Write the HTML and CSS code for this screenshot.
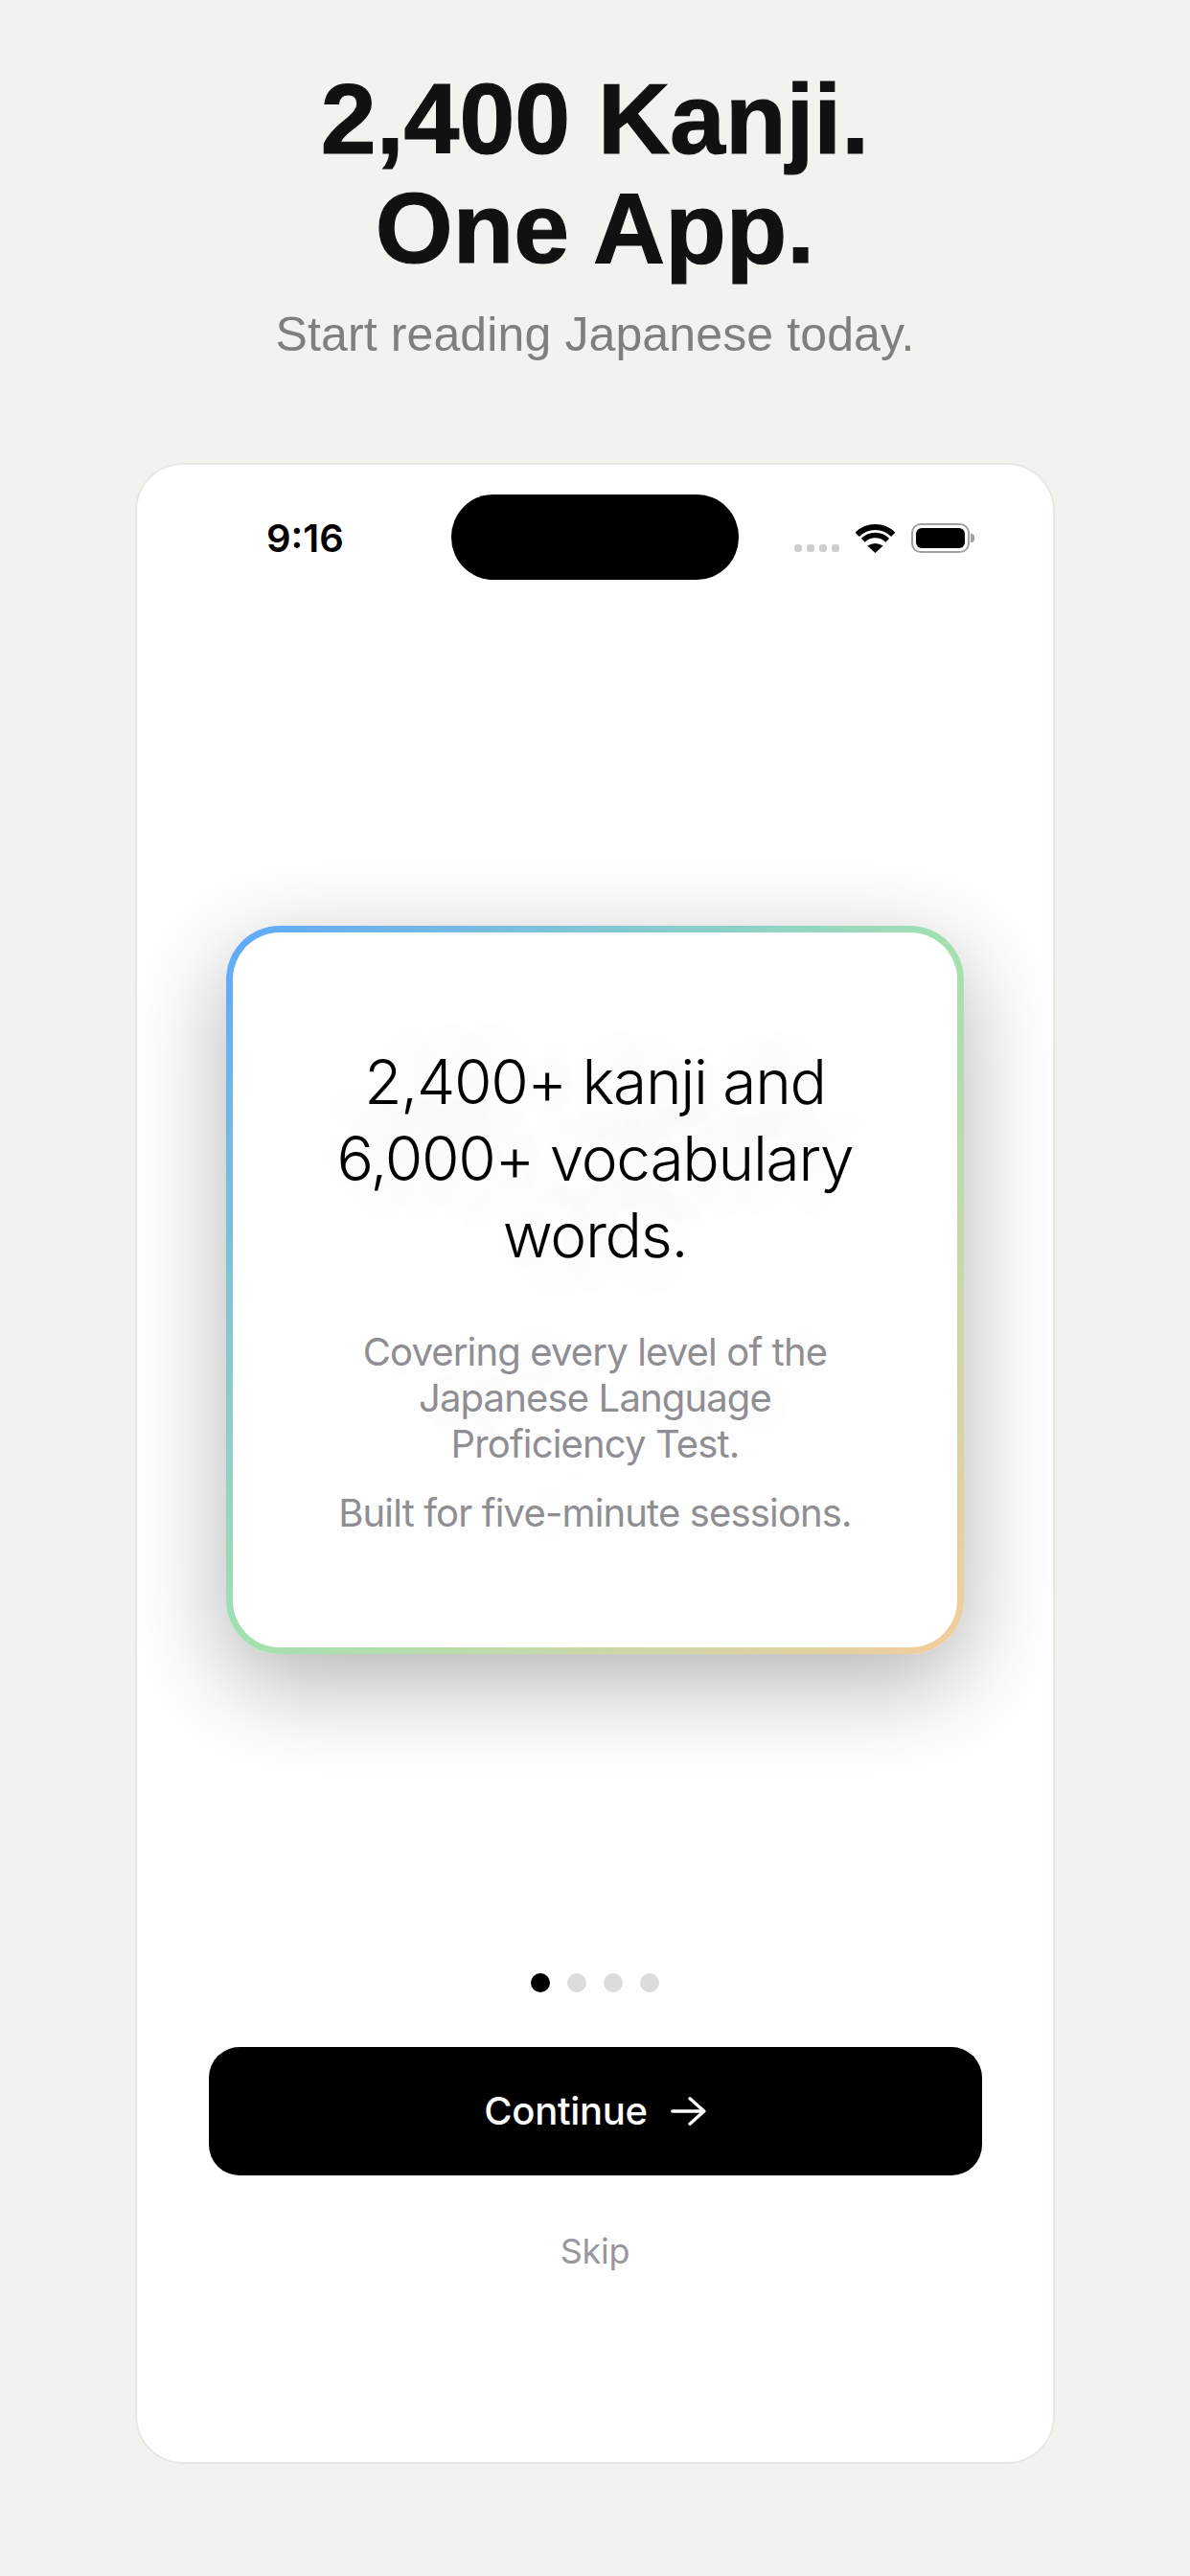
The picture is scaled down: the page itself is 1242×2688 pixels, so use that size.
FILE: index.html
```html
<!DOCTYPE html>
<html lang="en">
<head>
<meta charset="utf-8">
<title>2,400 Kanji. One App.</title>
<link rel="stylesheet" href="styles.css">
</head>
<body>
<header class="hero">
  <h1 class="hero-title">2,400 Kanji.<br>One App.</h1>
  <p class="hero-sub">Start reading Japanese today.</p>
</header>
<main class="phone">
  <div class="status">
    <span class="time">9:16</span>
    <div class="island"></div>
    <div class="status-icons">
      <div class="signal"><i></i><i></i><i></i><i></i></div>
      <svg class="wifi" width="41" height="30" viewBox="0 0 41 30" aria-hidden="true">
        <path d="M1.8 10.8A26.5 26.5 0 0 1 39.2 10.8" fill="none" stroke="#000" stroke-width="6"/>
        <path d="M7.8 16.7A18 18 0 0 1 33.2 16.7" fill="none" stroke="#000" stroke-width="5.5"/>
        <path d="M20.5 30L12.3 22.6Q20.5 17.6 28.7 22.6Z" fill="#000"/>
      </svg>
      <div class="battery"><div class="battery-body"><div class="battery-fill"></div></div><div class="battery-cap"></div></div>
    </div>
  </div>
  <section class="card">
    <div class="card-inner">
      <h2 class="card-title">2,400+ kanji and<br>6,000+ vocabulary<br>words.</h2>
      <p class="card-text">Covering every level of the<br>Japanese Language<br>Proficiency Test.</p>
      <p class="card-text card-text-last">Built for five-minute sessions.</p>
    </div>
  </section>
  <div class="pager"><i class="active"></i><i></i><i></i><i></i></div>
  <button class="continue" type="button">
    <span>Continue</span>
    <svg width="37" height="30" viewBox="0 0 37 30" aria-hidden="true"><path d="M1.8 15H34.5M20 1.8L34.8 15L20 28.2" fill="none" stroke="#fff" stroke-width="3.4" stroke-linecap="round" stroke-linejoin="round"/></svg>
  </button>
  <div class="skip">Skip</div>
</main>
</body>
</html>
```
FILE: styles.css
```css
* { box-sizing: border-box; }
html, body { margin: 0; padding: 0; }
body {
  width: 1242px;
  height: 2688px;
  background: #f3f2ef;
  overflow: hidden;
  font-family: Inter, "Liberation Sans", sans-serif;
}
.hero { height: 483px; padding-top: 67px; text-align: center; font-family: "Liberation Sans", Arial, sans-serif; }
.hero-title {
  margin: 0;
  font-size: 104px;
  line-height: 114.4px;
  font-weight: 700;
  color: #111;
  letter-spacing: 0;
  -webkit-text-stroke: 1.2px #111;
}
.hero-sub {
  margin: 23px 0 0;
  font-size: 50px;
  line-height: 60px;
  color: #7f7f7b;
  letter-spacing: 0.12px;
}
.phone {
  width: 960px;
  height: 2088px;
  margin: 0 auto;
  background: #fff;
  border: 2px solid #e8e7e3;
  border-radius: 50px;
  display: flex;
  flex-direction: column;
  align-items: center;
}
.status {
  width: 100%;
  padding: 31px 82px 0 135px;
  display: flex;
  align-items: flex-start;
}
.time {
  width: 80px;
  margin-top: 22px;
  font-size: 40px;
  line-height: 48px;
  font-weight: 600;
  color: #000;
  white-space: nowrap;
}
.island {
  width: 300px;
  height: 89px;
  margin-left: 113px;
  background: #000;
  border-radius: 44px;
}
.status-icons {
  margin-left: 58px;
  margin-top: 30px;
  display: flex;
  align-items: flex-end;
  gap: 17px;
}
.signal { display: flex; gap: 5px; margin-bottom: 1px; }
.signal i { width: 8px; height: 8px; border-radius: 3px; background: #cfcfcf; }
.wifi { display: block; }
.battery { display: flex; align-items: center; gap: 1px; }
.battery-body {
  width: 61px;
  height: 31px;
  padding: 3px;
  border: 2px solid #a2a2a2;
  border-radius: 10px;
}
.battery-fill { width: 100%; height: 100%; background: #000; border-radius: 6px; }
.battery-cap { width: 4px; height: 9px; background: #a2a2a2; border-radius: 0 3px 3px 0; }
.card {
  width: 770px;
  height: 760px;
  margin-top: 361px;
  padding: 7px;
  border-radius: 56px;
  background: linear-gradient(135deg, #5fa8fa 0%, #a2e1b1 50%, #f3cd9c 100%);
  box-shadow: 0 30px 100px rgba(0, 0, 0, 0.3);
}
.card-inner {
  height: 100%;
  border-radius: 49px;
  background: #fff;
  display: flex;
  flex-direction: column;
  justify-content: center;
  text-align: center;
}
.card-title {
  margin: 0 0 58px;
  font-size: 64px;
  line-height: 80px;
  font-weight: 300;
  color: #000;
  letter-spacing: -1.3px;
  text-shadow: 0 0 90px rgba(0, 0, 0, 0.22);
}
.card-text {
  margin: 0;
  font-size: 40px;
  line-height: 48px;
  font-weight: 400;
  color: #8e8e93;
  letter-spacing: -0.85px;
  text-shadow: 0 0 90px rgba(0, 0, 0, 0.22);
}
.card-text-last { margin-top: 24px; }
.pager { margin-top: 333px; display: flex; gap: 18px; }
.pager i { width: 20px; height: 20px; border-radius: 50%; background: #dcdcde; }
.pager i.active { background: #000; }
.continue {
  width: 807px;
  height: 134px;
  margin-top: 57px;
  border: 0;
  border-radius: 32px;
  background: #000;
  color: #fff;
  font: 500 40px/48px Inter, "Liberation Sans", sans-serif;
  letter-spacing: -0.3px;
  display: flex;
  align-items: center;
  justify-content: center;
  gap: 24px;
}
.skip {
  margin-top: 57px;
  font-size: 36px;
  line-height: 44px;
  color: #98989c;
  letter-spacing: -0.3px;
}
```
